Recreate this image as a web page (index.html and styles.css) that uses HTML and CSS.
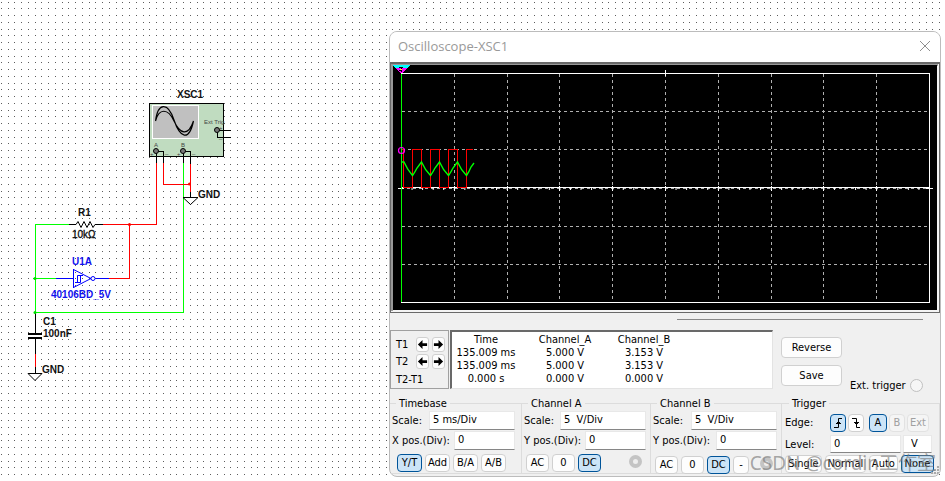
FILE: index.html
```html
<!DOCTYPE html>
<html lang="en">
<head>
<meta charset="utf-8">
<title>Oscilloscope-XSC1</title>
<link rel="stylesheet" href="styles.css">
</head>
<body>
<main class="desk">
<svg class="schematic" role="img" aria-label="RC oscillator schematic">
  <defs>
    <pattern id="dots" width="27" height="27" patternUnits="userSpaceOnUse">
      <path d="M1 2.500h1M8 2.500h1M14 2.500h1M21 2.500h1M1 8.500h1M8 8.500h1M14 8.500h1M21 8.500h1M1 15.500h1M8 15.500h1M14 15.500h1M21 15.500h1M1 22.500h1M8 22.500h1M14 22.500h1M21 22.500h1" stroke="#5c5c5c"/>
    </pattern>
  </defs>
  <rect width="100%" height="100%" fill="url(#dots)"/>
  <g fill="none" shape-rendering="crispEdges">
    <rect x="149.500" y="103.500" width="74" height="53" fill="#c0dcc0" stroke="#000"/>
    <rect x="152.500" y="105.500" width="46" height="33" fill="#c0c0c0" stroke="#fff"/>
    <path stroke="#0f0" d="M35.500 312V224.500H69M33 278.500H57M183.500 163V312.500H34"/>
    <path stroke="#f00" d="M156.500 163V224.500H102M129.500 224V278.500H108M163.500 163V184.500H190.500M190.500 164V192M35.500 354V367"/>
    <path stroke="#00f" d="M56 278.500H74M96 278.500H109M73.500 269V288"/>
    <path stroke="#000" d="M156.500 151V163M157 151.500H163.500V163M183.500 151V163M184 151.500H190.500V164M190.500 192V197M217 130.500H231M217.500 130V137.500H231M35.500 312V333M35.500 339V354M35.500 367V373"/>
    <path stroke="#000" stroke-width="2" d="M28 334H42M28 338H42"/>
  </g>
  <g fill="none" stroke="#000">
    <path d="M155.500 121C158 102 168 102 174 120S189 142 193.500 121M155.500 121C159 108 168 108 174 121S188 137 193.500 121" stroke-width="1.200"/>
    <path d="M183 197.500H198L190.500 204.500ZM28 373.500H42L35 380.500ZM69 224.500H76L78 221.500 81 227.500 84 221.500 87 227.500 90 221.500 93 227.500 95 224.500H103"/>
    <path stroke="#00f" d="M73.500 269.500L91 278.500 73.500 287.500M75 282.500H80.500V275.500H83M77.500 282.500V275.500H81"/>
    <circle cx="93" cy="278.500" r="2" stroke="#00f"/>
    <g fill="#777"><circle cx="156" cy="151" r="2.500"/><circle cx="183" cy="151" r="2.500"/><circle cx="217" cy="130" r="2.500"/></g>
  </g>
  <g fill="#0d0"><circle cx="35" cy="278.500" r="1.500"/><circle cx="35" cy="312.500" r="1.500"/></g>
  <g fill="#f00"><circle cx="129.500" cy="224.500" r="1.500"/><circle cx="189.500" cy="184" r="1.500"/></g>
  <g class="part">
    <text x="177" y="98">XSC1</text><text x="198" y="198">GND</text>
    <text x="78" y="216">R1</text><text x="72" y="238" class="value">10kΩ</text>
    <text x="43" y="325">C1</text><text x="43" y="337">100nF</text><text x="42" y="373">GND</text>
    <g class="chip"><text x="72" y="265">U1A</text><text x="51" y="298">40106BD_5V</text></g>
  </g>
  <g class="pin">
    <text x="204" y="124">Ext Trig</text><text x="154" y="147">A</text><text x="181" y="147">B</text>
    <text x="150" y="156">+</text><text x="177" y="156">+</text><text x="165" y="154">_</text><text x="192" y="154">_</text>
    <text x="219" y="130">+</text><text x="219" y="139">_</text>
  </g>
</svg>

<section class="window" aria-label="Oscilloscope-XSC1">
  <header class="titlebar">
    <h1>Oscilloscope-XSC1</h1>
    <button class="close" aria-label="Close"><svg width="12" height="12" viewBox="0 0 12 12"><path d="M1 1L11 11M11 1L1 11" stroke="#8f8f8f" fill="none"/></svg></button>
  </header>

  <svg class="screen" viewBox="390 62 550 251" role="img" aria-label="Waveforms of channel A and channel B">
    <defs>
      <pattern id="ticks" x="401" y="187" width="10.560" height="4" patternUnits="userSpaceOnUse"><path d="M.5 0V3" stroke="#fff"/></pattern>
    </defs>
    <rect x="390" y="62" width="550" height="251" fill="#696969"/>
    <rect x="391" y="64" width="548" height="248" fill="#f4f4f4"/>
    <path d="M391 311V64H938V66H393V311Z" fill="#999"/>
    <rect x="393" y="65" width="544" height="245"/>
    <g fill="none" shape-rendering="crispEdges">
      <path stroke="#b0b0b0" stroke-dasharray="3 3" d="M454.500 74V302M507.500 74V302M559.500 74V302M612.500 74V302M665.500 74V302M718.500 74V302M771.500 74V302M823.500 74V302M876.500 74V302M402 111.500H929M402 149.500H929M402 226.500H929M402 264.500H929M401 188.500H929"/>
      <path stroke="#fff" d="M401 73.500H929.500V302.500H401M401 187.500H929M398 188.500H404M926 188.500H933M665.500 70V76M454.500 186V191M507.500 186V191M559.500 186V191M612.500 186V191M665.500 186V191M718.500 186V191M771.500 186V191M823.500 186V191M876.500 186V191"/>
      <rect x="401" y="187" width="528" height="3" fill="url(#ticks)"/>
      <path fill="#0ff" d="M393 65H410L408 68H395Z"/>
      <path fill="#f0f" d="M395 68H408L402 73H400Z"/>
      <path stroke="#000" d="M399 67.500H403M401.500 68V72M399 70.500H402"/>
      <path stroke="#ff0" d="M400 69.500H402"/>
      <path stroke="#f00" d="M401 149.500H403.500V187.500H412.500V149.500H421.500V187.500H430.500V149.500H439.500V187.500H448.500V149.500H457.500V187.500H466.500V149.500H473"/>
      <path stroke="#0f0" d="M401.500 74V302"/>
    </g>
    <path fill="none" stroke="#0f0" stroke-width="1.400" d="M402 162L404 162Q407 169 412.500 175.500Q415 172 417 168L421.500 162Q425 170 430.500 175.500Q433 172 435 168L439.500 162Q443 170 448.500 175.500Q451 172 453 168L457.500 162Q461 170 466.500 175.500Q469 172 471 167L474 163"/>
    <circle cx="401.500" cy="150.500" r="3" fill="none" stroke="#f0f" stroke-width="1.200"/>
  </svg>

  <div class="rule"></div>

  <div class="measure">
    <div class="cursors">
      <span>T1</span><button aria-label="T1 left"><svg viewBox="0 0 12 12"><path d="M1 6L6 1V4.500H11V7.500H6V11Z"/></svg></button><button aria-label="T1 right"><svg viewBox="0 0 12 12"><path d="M11 6L6 1V4.500H1V7.500H6V11Z"/></svg></button>
      <span>T2</span><button aria-label="T2 left"><svg viewBox="0 0 12 12"><path d="M1 6L6 1V4.500H11V7.500H6V11Z"/></svg></button><button aria-label="T2 right"><svg viewBox="0 0 12 12"><path d="M11 6L6 1V4.500H1V7.500H6V11Z"/></svg></button>
      <span class="delta">T2-T1</span>
    </div>
    <div class="readout">
      <table>
        <thead><tr><th>Time</th><th>Channel_A</th><th>Channel_B</th></tr></thead>
        <tbody>
          <tr><td>135.009 ms</td><td>5.000 V</td><td>3.153 V</td></tr>
          <tr><td>135.009 ms</td><td>5.000 V</td><td>3.153 V</td></tr>
          <tr><td>0.000 s</td><td>0.000 V</td><td>0.000 V</td></tr>
        </tbody>
      </table>
    </div>
    <div class="actions"><button>Reverse</button><button>Save</button></div>
    <label class="ext">Ext. trigger <input type="radio" name="ext"></label>
  </div>

  <div class="groups">
    <fieldset>
      <legend>Timebase</legend>
      <div class="row"><label for="ts">Scale:</label><input class="wide" id="ts" value="5 ms/Div"></div>
      <div class="row"><label for="tx">X pos.(Div):</label><input class="narrow" id="tx" value="0"></div>
      <div class="keys time"><button class="on">Y/T</button><button>Add</button><button>B/A</button><button>A/B</button></div>
    </fieldset>
    <fieldset>
      <legend>Channel A</legend>
      <div class="row"><label for="as">Scale:</label><input class="wide" id="as" value="5  V/Div"></div>
      <div class="row"><label for="ay">Y pos.(Div):</label><input class="narrow" id="ay" value="0"></div>
      <div class="keys chan"><button>AC</button><button>0</button><button class="on">DC</button><input type="radio" class="port" aria-label="Channel A input"></div>
    </fieldset>
    <fieldset>
      <legend>Channel B</legend>
      <div class="row"><label for="bs">Scale:</label><input class="wide" id="bs" value="5  V/Div"></div>
      <div class="row"><label for="by">Y pos.(Div):</label><input class="narrow" id="by" value="0"></div>
      <div class="keys chan low"><button>AC</button><button>0</button><button class="on">DC</button><button class="minus">-</button><input type="radio" class="port" aria-label="Channel B input"></div>
    </fieldset>
    <fieldset class="trigger">
      <legend>Trigger</legend>
      <div class="row edge"><span>Edge:</span>
        <button class="on" aria-label="Rising edge"><svg viewBox="0 0 12 12"><path d="M2 10.500H6.500V1.500H10M4 6.500H9M5 5.500H8"/></svg></button>
        <button aria-label="Falling edge"><svg viewBox="0 0 12 12"><path d="M2 1.500H6.500V10.500H10M4 5.500H9M5 6.500H8"/></svg></button>
        <button class="on src">A</button><button disabled>B</button><button class="wider" disabled>Ext</button>
      </div>
      <div class="row level"><label for="lv">Level:</label><input id="lv" value="0"><input class="unit" aria-label="Level unit" value="V"></div>
      <div class="keys modes"><button>Single</button><button>Normal</button><button>Auto</button><button class="on">None</button></div>
    </fieldset>
  </div>
  <svg class="grip" width="9" height="9" viewBox="0 0 9 9"><path d="M6 1h2M3 4h2M6 4h2M0 7h2M3 7h2M6 7h2" stroke="#aaa" stroke-width="2"/></svg>
</section>
<p class="mark">CSDN @cordin工作室</p>
</main>
</body>
</html>
```
FILE: styles.css
```css
* { box-sizing: border-box; }
body {
  margin: 0;
  background: #fff;
  color: #000;
  font: 11px/13px "DejaVu Sans Condensed", "DejaVu Sans", sans-serif;
}
button, input { font: inherit; color: inherit; margin: 0; }
.desk { position: relative; min-height: 100vh; overflow: hidden; }
.schematic { position: absolute; inset: 0; width: 100%; height: 100%; }
.part { font: bold 10px "Liberation Sans", sans-serif; fill: #111; }
.part .value { font-weight: normal; stroke: #000; stroke-width: 0.3px; }
.part .chip { fill: #11e; }
.pin { font: 6px "Liberation Sans", sans-serif; fill: #444; }

.window {
  position: absolute;
  left: 389px;
  right: 4px;
  top: 31px;
  background: #f0f0f0;
  border: 1px solid #bcbcbc;
  border-radius: 8px;
  padding-bottom: 2px;
  overflow: hidden;
}
.titlebar {
  display: flex;
  align-items: center;
  justify-content: space-between;
  height: 30px;
  padding: 0 9px 2px 8px;
  background: #fff;
}
.titlebar h1 { margin: 0; font: 13px/18px "Open Sans", sans-serif; color: #999; }
.close { display: flex; padding: 0; border: 0; background: none; }
.screen { display: block; width: 100%; height: auto; }
.rule { height: 1px; margin: 6px 17px 10px 287px; background: #888; }

.measure { display: flex; height: 62px; }
.cursors {
  display: grid;
  grid-template-columns: 17px 13px 13px;
  grid-template-rows: 17px 17px 16px;
  column-gap: 3px;
  align-items: center;
  width: 59px;
  height: 59px;
  padding: 5px 0 0 5px;
  border: 1px solid #a0a0a0;
}
.cursors .delta { grid-column: 1 / -1; align-self: end; }
.cursors button {
  display: flex;
  width: 13px;
  height: 15px;
  padding: 0;
  align-items: center;
  border: 1px solid #d0d0d0;
  border-radius: 3px;
  background: #fdfdfd;
}
.cursors svg { width: 11px; height: 11px; }
.readout {
  width: 323px;
  height: 59px;
  margin-left: 1px;
  padding-top: 1px;
  background: #fff;
  border: 1px solid #e3e3e3;
  border-top: 2px solid #696969;
  border-left: 2px solid #696969;
}
table { width: 226px; table-layout: fixed; border-collapse: collapse; text-align: center; }
th:first-child { width: 68px; }
th:nth-child(2) { width: 90px; }
th, td { padding: 0; font-weight: normal; }
.actions { display: flex; flex-direction: column; gap: 7px; padding: 7px 0 0 8px; }
.actions button {
  width: 61px;
  height: 21px;
  padding: 0;
  background: #fdfdfd;
  border: 1px solid #d0d0d0;
  border-radius: 4px;
}
.ext { display: flex; align-items: center; gap: 4px; align-self: flex-end; margin-left: 8px; white-space: nowrap; }
.ext input {
  appearance: none;
  width: 13px;
  height: 13px;
  border: 1px solid #c0c0c0;
  border-radius: 50%;
  background: #f6f6f6;
}

.groups { display: grid; grid-template-columns: 132fr 129fr 131fr 158fr; margin-top: 5px; }
fieldset {
  min-width: 0;
  height: 77px;
  margin: 0;
  padding: 0 4px 0 2px;
  border: 1px solid #dcdcdc;
  border-left-width: 0;
}
fieldset:first-child { padding-right: 6px; }
legend { margin-left: 4px; padding: 0 3px; }
.row { display: flex; align-items: center; justify-content: space-between; height: 20px; white-space: nowrap; }
.row input {
  height: 19px;
  padding: 0 3px 1px;
  border: 1px solid #e8e8e8;
  border-bottom: 1px solid #868686;
  background: #fff;
}
.row .wide { width: 86px; }
.row .narrow { width: 61px; }
.keys { display: flex; gap: 3px; padding: 4px 0 0 2px; }
.keys button, .edge button {
  flex: none;
  width: 25px;
  height: 18px;
  padding: 0;
  line-height: 16px;
  text-align: center;
  border: 1px solid #d0d0d0;
  border-radius: 4px;
  background: #fdfdfd;
}
.time { padding-left: 5px; }
.keys .on, .edge .on { background: #cce4f7; border-color: #005499; }
.chan button { width: 23px; }
.chan .minus { width: 16px; }
.low { padding-top: 6px; }
.port {
  appearance: none;
  width: 13px;
  height: 13px;
  margin: 1px 4px 0 auto;
  border: 4px solid #c4c4c4;
  border-radius: 50%;
  background: #eee;
}
.trigger { padding-left: 3px; padding-right: 5px; }
.edge { justify-content: flex-start; gap: 2px; height: 25px; }
.edge span { width: 43px; }
.edge button { width: 16px; }
.edge .src { width: 18px; margin-left: 3px; }
.edge .wider { width: 22px; }
.edge button:disabled { color: #a0a0a0; border-color: #e2e2e2; background: #f5f5f5; }
.edge svg { display: block; width: 12px; height: 12px; margin: 0 auto; fill: none; stroke: #000; }
.level { justify-content: flex-start; gap: 2px; height: 18px; }
.level label { width: 43px; }
.level input { width: 71px; height: 18px; }
.level .unit { width: 29px; padding-left: 7px; }
.modes { padding: 2px 0 0; }
.modes button { flex: 36 1 0; }
.modes button:nth-child(2) { flex-grow: 40; }
.modes button:nth-child(3) { flex-grow: 28; }
.modes button:nth-child(4) { flex-grow: 32; }
.grip { position: absolute; right: 0; bottom: 1px; }
.mark {
  position: absolute;
  right: 9px;
  bottom: 5px;
  margin: 0;
  font: 19px/26px "Noto Sans", "Noto Sans CJK SC", sans-serif;
  color: rgba(120, 120, 120, 0.65);
  white-space: nowrap;
}
```
